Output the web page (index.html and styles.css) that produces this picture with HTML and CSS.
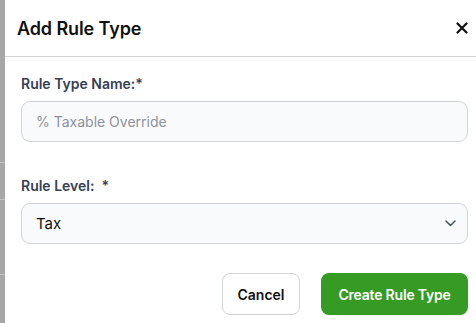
FILE: index.html
```html
<!DOCTYPE html>
<html lang="en">
<head>
    <meta charset="UTF-8">
    <meta name="viewport" content="width=device-width, initial-scale=1.0">
    <title>Add Rule Type</title>
    <link rel="stylesheet" href="styles.css">
</head>
<body>

<div class="page">
    <div class="backdrop">
        <span class="backdrop-line line-1"></span>
        <span class="backdrop-line line-2"></span>
        <span class="backdrop-line line-3"></span>
    </div>

    <div class="modal">
        <div class="modal-header">
            <h2 class="modal-title">Add Rule Type</h2>
            <button class="modal-close" aria-label="Close">
                <svg width="12" height="12" viewBox="0 0 12 12">
                    <path d="M1.5 1.5 L10.5 10.5 M10.5 1.5 L1.5 10.5" stroke="#111" stroke-width="2.2" stroke-linecap="round"/>
                </svg>
            </button>
        </div>

        <div class="modal-body">
            <div class="field">
                <label class="field-label">Rule Type Name:*</label>
                <input class="field-input" type="text" placeholder="% Taxable Override">
            </div>

            <div class="field">
                <label class="field-label">Rule Level: &nbsp;*</label>
                <div class="field-select">
                    <span>Tax</span>
                    <svg width="11" height="7" viewBox="0 0 11 7">
                        <path d="M1 1 L5.5 5.5 L10 1" fill="none" stroke="#4b5563" stroke-width="1.5" stroke-linecap="round" stroke-linejoin="round"/>
                    </svg>
                </div>
            </div>

            <div class="modal-actions">
                <button class="btn btn-cancel">Cancel</button>
                <button class="btn btn-create">Create Rule Type</button>
            </div>
        </div>
    </div>
</div>

</body>
</html>
```

FILE: styles.css
```css
body {
    margin: 0;
    padding: 0;
    font-family: 'Inter', 'Liberation Sans', sans-serif;
    background: #fff;
    color: #111827;
}

.page {
    display: flex;
    height: 323px;
    overflow: hidden;
}

.backdrop {
    position: relative;
    width: 5px;
    flex: 0 0 5px;
    background: #a7a7a7;
}

.backdrop-line {
    position: absolute;
    left: 0;
    width: 5px;
    height: 1px;
    background: #c4c4c4;
}

.line-1 { top: 162px; }
.line-2 { top: 199px; }
.line-3 { top: 274px; }

.modal {
    flex: 1;
    background: #fff;
}

.modal-header {
    display: flex;
    align-items: center;
    justify-content: space-between;
    height: 57px;
    padding: 0 8px 0 12px;
    border-bottom: 1px solid #d4d4d8;
    box-sizing: border-box;
}

.modal-title {
    margin: 0;
    font-size: 18px;
    font-weight: 600;
    color: #111;
    letter-spacing: -0.1px;
}

.modal-close {
    border: none;
    background: none;
    padding: 0;
    display: flex;
    cursor: pointer;
}

.modal-body {
    padding: 17px 8px 0 16px;
}

.field {
    display: flex;
    flex-direction: column;
    gap: 7px;
    margin-bottom: 34px;
}

.field + .field {
    margin-bottom: 29px;
}

.field-label {
    font-size: 14px;
    font-weight: 600;
    color: #374151;
    line-height: 20px;
}

.field-input,
.field-select {
    height: 41px;
    box-sizing: border-box;
    border: 1px solid #d1d5db;
    border-radius: 9px;
    background: #f9fafb;
    padding: 0 14px;
    font-family: inherit;
}

.field-input {
    font-size: 14px;
    color: #111;
    outline: none;
}

.field-input::placeholder {
    color: #8b929c;
}

.field-select {
    display: flex;
    align-items: center;
    justify-content: space-between;
    font-size: 15px;
    color: #111;
    padding-right: 11px;
}

.modal-actions {
    display: flex;
    justify-content: flex-end;
    gap: 21px;
}

.btn {
    height: 42px;
    border-radius: 8px;
    font-family: inherit;
    font-size: 14px;
    font-weight: 600;
    cursor: pointer;
}

.btn-cancel {
    width: 78px;
    background: #fff;
    border: 1px solid #d1d5db;
    color: #111;
}

.btn-create {
    width: 147px;
    background: #359b24;
    border: none;
    color: #fff;
    letter-spacing: -0.2px;
}
```
